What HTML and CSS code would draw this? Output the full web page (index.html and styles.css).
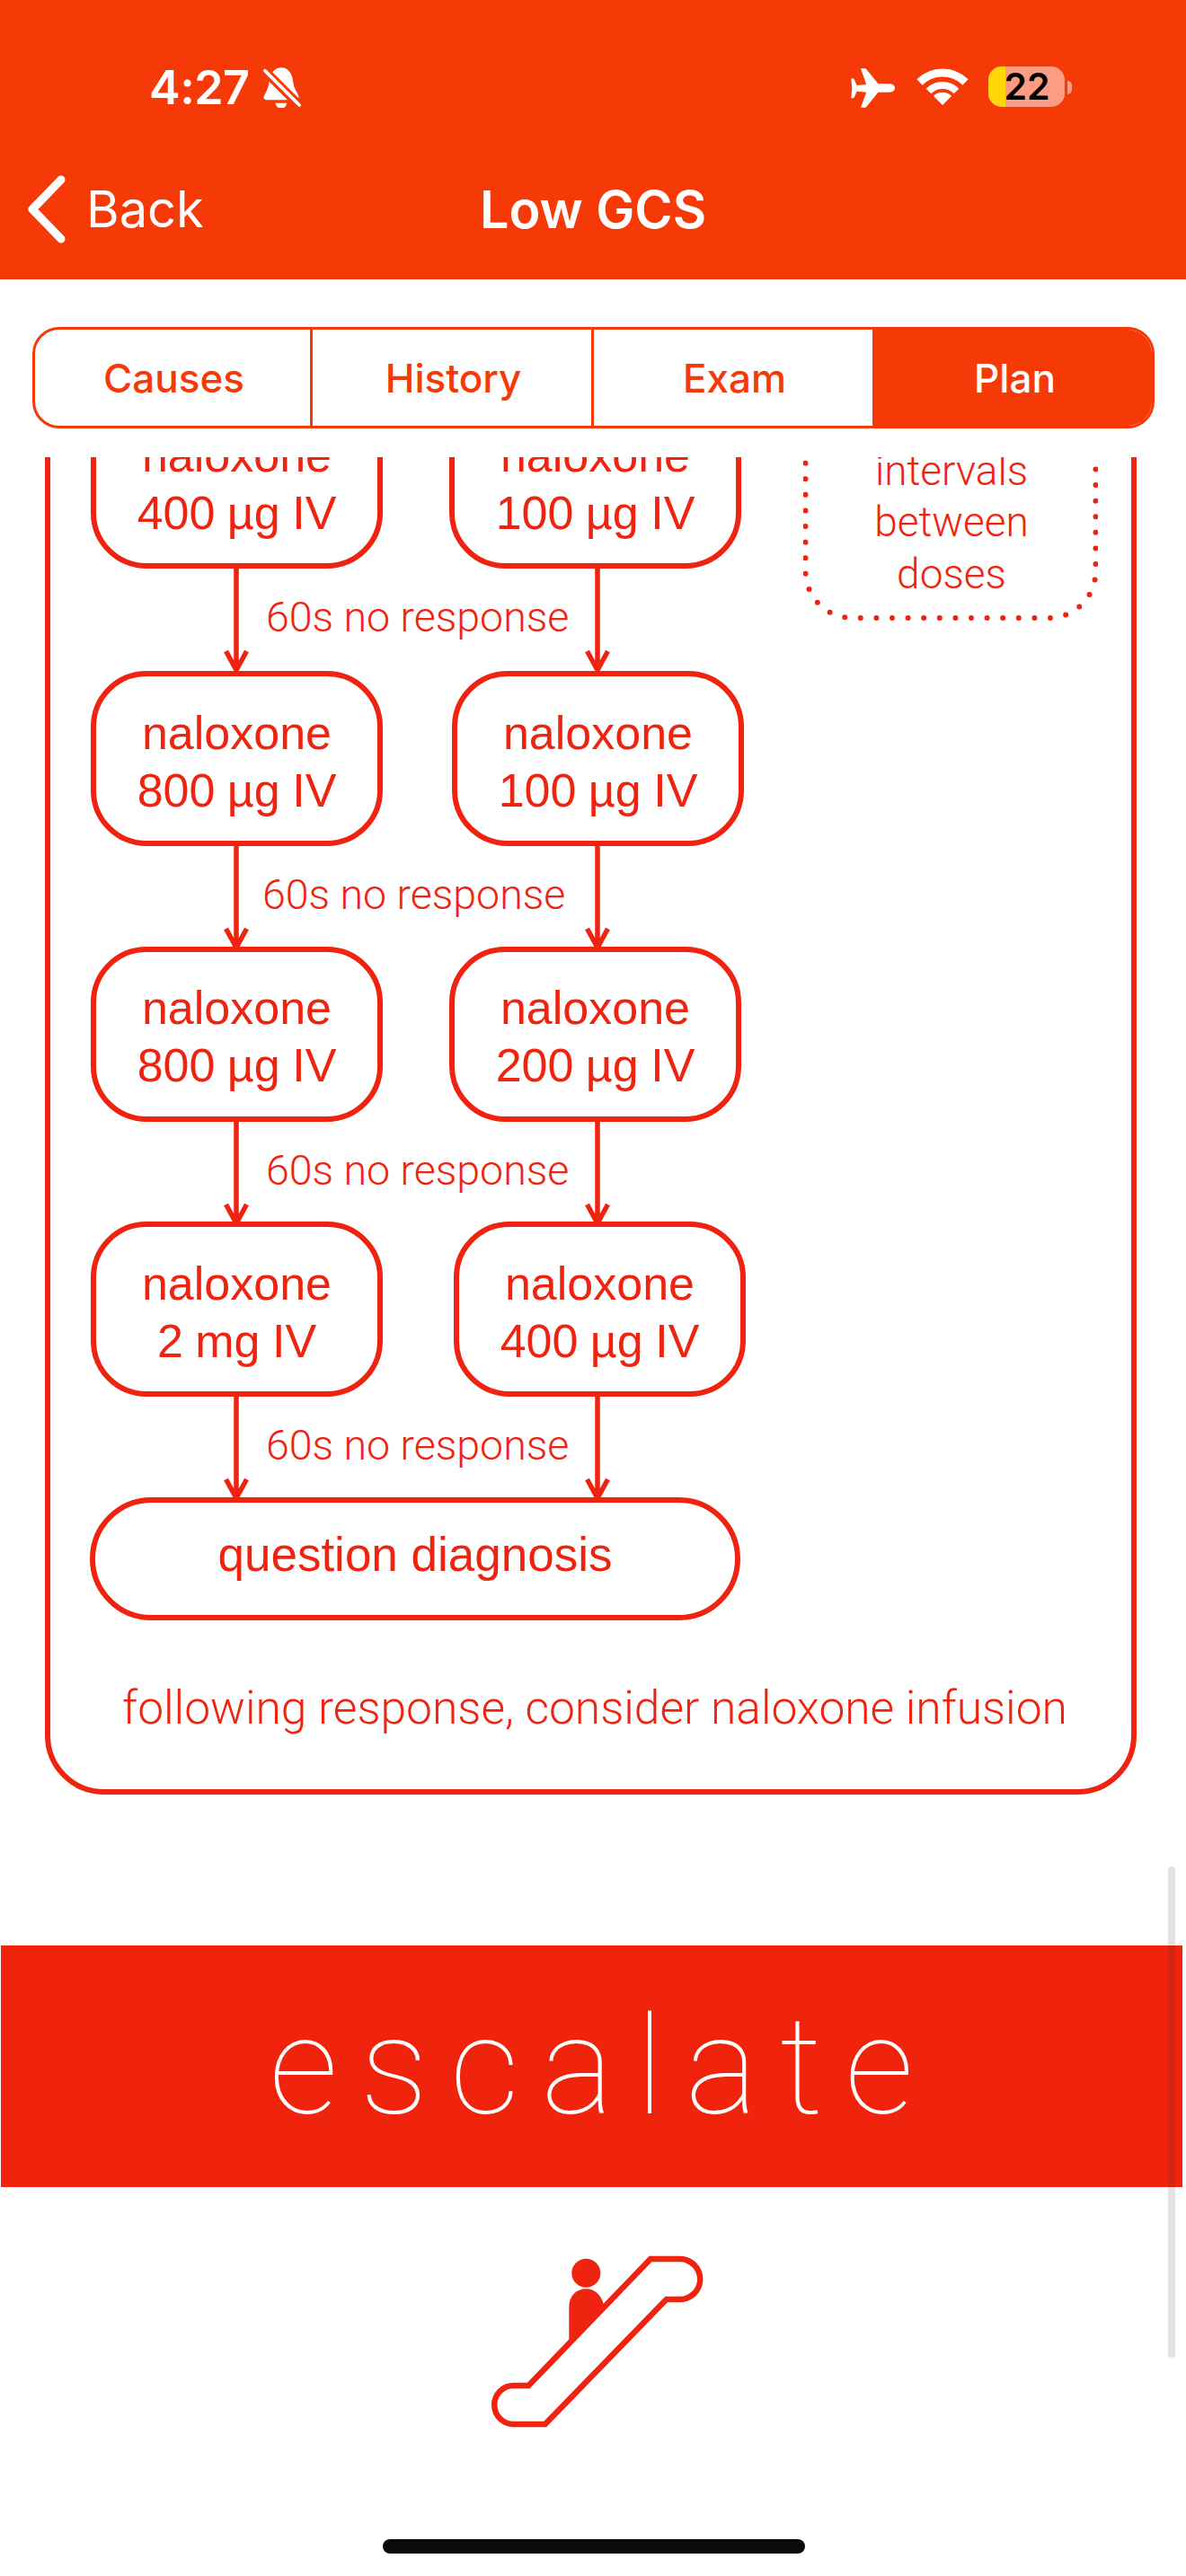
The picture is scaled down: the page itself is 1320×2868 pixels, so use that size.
FILE: index.html
```html
<!doctype html>
<html>
<head>
  <title>Low GCS</title>
  <link rel="stylesheet" href="styles.css">
</head>
<body>

  <header class="top">
    <div class="status">
      <div class="status-left">
        <span class="clock">4:27</span>
        <svg class="bell" viewBox="485 75 127 135">
          <path fill="#fff" d="M546 76C568 76 582 94 585 122C588 150 604 164 604 174C604 181 598 184 592 184H498C491 184 486 180 487 174C489 165 503 150 505 122C508 94 524 76 546 76Z"/>
          <path fill="#fff" d="M526 194H564C562 218 529 218 526 194Z"/>
          <path stroke="#f53a08" stroke-width="30" d="M480 76L618 214"/>
          <path stroke="#fff" stroke-width="11" stroke-linecap="round" d="M491 86L606 201"/>
        </svg>
      </div>
      <div class="status-right">
        <svg class="plane" viewBox="80 78 148 132">
          <path fill="#fff" d="M113 78H130L172 130H210C222 130 228 138 228 144C228 151 222 158 210 158H172L130 210H113L132 158L100 155L90 178H81L84 145L81 112H90L100 135L132 132Z"/>
        </svg>
        <svg class="wifi" viewBox="0 0 58 42">
          <path fill="none" stroke="#fff" stroke-width="9" d="M3.5 15.5A36 36 0 0 1 54.500 15.500"/>
          <path fill="none" stroke="#fff" stroke-width="8" d="M13.500 25.500A22 22 0 0 1 44.500 25.500"/>
          <path fill="#fff" d="M29 41L19 31A14 14 0 0 1 39 31Z"/>
        </svg>
        <div class="battery">
          <div class="battery-level"></div>
          <span class="battery-num">22</span>
        </div>
        <div class="battery-cap"></div>
      </div>
    </div>
    <nav class="navbar">
      <div class="back">
        <svg class="chevron" viewBox="0 0 44 76">
          <path fill="none" stroke="#fff" stroke-width="9" stroke-linecap="round" stroke-linejoin="round" d="M38 5L6 38L38 71"/>
        </svg>
        <span>Back</span>
      </div>
      <div class="nav-title">Low GCS</div>
    </nav>
  </header>

  <div class="tabs">
    <div class="tab">Causes</div>
    <div class="tab">History</div>
    <div class="tab">Exam</div>
    <div class="tab tab-on">Plan</div>
  </div>

  <main class="scroll">
    <section class="panel">

      <div class="row">
        <div class="box">naloxone<br>400 µg IV</div>
        <div class="box">naloxone<br>100 µg IV</div>
        <div class="note">
          <svg class="note-dots" viewBox="0 0 328 300">
            <rect x="2.500" y="-60" width="323" height="357" rx="52" fill="none" stroke="#ee2410" stroke-width="6" stroke-linecap="round" stroke-dasharray="0 17.600"/>
          </svg>
          <div class="note-text">intervals<br>between<br>doses</div>
        </div>
      </div>

      <div class="link link-first">
        <svg class="arrow" viewBox="0 0 28 115"><path d="M14 0V113M2.500 92L14 113L25.500 92"/></svg>
        <div class="link-label">60s no response</div>
        <svg class="arrow" viewBox="0 0 28 115"><path d="M14 0V113M2.500 92L14 113L25.500 92"/></svg>
      </div>

      <div class="row">
        <div class="box">naloxone<br>800 µg IV</div>
        <div class="box box-r2">naloxone<br>100 µg IV</div>
      </div>

      <div class="link link-alt">
        <svg class="arrow" viewBox="0 0 28 115"><path d="M14 0V113M2.500 92L14 113L25.500 92"/></svg>
        <div class="link-label">60s no response</div>
        <svg class="arrow" viewBox="0 0 28 115"><path d="M14 0V113M2.500 92L14 113L25.500 92"/></svg>
      </div>

      <div class="row">
        <div class="box">naloxone<br>800 µg IV</div>
        <div class="box">naloxone<br>200 µg IV</div>
      </div>

      <div class="link">
        <svg class="arrow" viewBox="0 0 28 115"><path d="M14 0V113M2.500 92L14 113L25.500 92"/></svg>
        <div class="link-label">60s no response</div>
        <svg class="arrow" viewBox="0 0 28 115"><path d="M14 0V113M2.500 92L14 113L25.500 92"/></svg>
      </div>

      <div class="row">
        <div class="box">naloxone<br>2 mg IV</div>
        <div class="box box-r4">naloxone<br>400 µg IV</div>
      </div>

      <div class="link">
        <svg class="arrow" viewBox="0 0 28 115"><path d="M14 0V113M2.500 92L14 113L25.500 92"/></svg>
        <div class="link-label">60s no response</div>
        <svg class="arrow" viewBox="0 0 28 115"><path d="M14 0V113M2.500 92L14 113L25.500 92"/></svg>
      </div>

      <div class="box-wide">question diagnosis</div>

      <p class="footnote">following response, consider naloxone infusion</p>
    </section>

    <div class="banner">escalate</div>

    <div class="icon-wrap">
      <svg class="escalator" viewBox="500 2460 320 260">
        <circle cx="652.300" cy="2530.700" r="16" fill="#ee2410"/>
        <path fill="#ee2410" d="M633.300 2606V2568C633.300 2556 642 2548.300 652.300 2548.300C662 2548.300 669 2555 672 2566Z"/>
        <path fill="#fff" stroke="#ee2410" stroke-width="6.500" stroke-linejoin="miter" d="M724 2515H756.700A22.500 22.500 0 0 1 756.700 2560H741.700L606.700 2699H571.700A21.500 21.500 0 0 1 571.700 2656H588.300Z"/>
      </svg>
    </div>
  </main>

  <div class="scrollbar"></div>
  <div class="home-bar"></div>

</body>
</html>
```

FILE: styles.css
```css
html, body {
  margin: 0;
  padding: 0;
}

body {
  width: 1320px;
  height: 2868px;
  overflow: hidden;
  position: relative;
  display: flex;
  flex-direction: column;
  background: #fff;
  font-family: "Liberation Sans", Arial, sans-serif;
  color: #ee2410;
}

/* header */

.top {
  height: 311px;
  flex: none;
  background: #f53a08;
  color: #fff;
  font-family: Inter, "Liberation Sans", sans-serif;
}

.status {
  height: 173px;
  display: flex;
  justify-content: space-between;
  box-sizing: border-box;
  padding: 74px 127px 0 166px;
}

.status-left {
  display: flex;
  align-items: flex-start;
}

.clock {
  font-size: 52px;
  line-height: 52px;
  font-weight: 600;
  letter-spacing: -0.5px;
  margin-top: -2px;
}

.bell {
  width: 44px;
  height: 45px;
  margin: 1px 0 0 14px;
}

.status-right {
  display: flex;
  align-items: flex-start;
}

.plane {
  width: 49px;
  height: 44px;
  margin: 2px 24px 0 0;
}

.wifi {
  width: 58px;
  height: 42px;
  margin: 2px 22px 0 0;
}

.battery {
  width: 85px;
  height: 45px;
  border-radius: 15px;
  position: relative;
  background: #fd9c84;
}

.battery-level {
  width: 19px;
  height: 100%;
  border-radius: 15px 0 0 15px;
  background: #ffd60a;
}

.battery-num {
  position: absolute;
  left: 13px;
  top: 0;
  width: 60px;
  text-align: center;
  color: #000;
  font-size: 41px;
  line-height: 45px;
  font-weight: 600;
}

.battery-cap {
  width: 5px;
  height: 15px;
  margin: 16px 0 0 3px;
  background: #fd9c84;
  border-radius: 0 8px 8px 0;
}

.navbar {
  height: 138px;
  display: flex;
  position: relative;
  justify-content: center;
}

.back {
  position: absolute;
  left: 30px;
  top: 22px;
  display: flex;
  align-items: center;
  gap: 22px;
  font-size: 56px;
  line-height: 76px;
}

.chevron {
  width: 44px;
  height: 76px;
}

.nav-title {
  font-size: 57.500px;
  font-weight: 600;
  line-height: 76px;
  margin-top: 22px;
}

/* segmented control */

.tabs {
  flex: none;
  box-sizing: border-box;
  width: 1249px;
  height: 113px;
  margin: 53px 0 32px 36px;
  display: grid;
  grid-template-columns: 309px 313px 313px 1fr;
  border: 3.500px solid #f53a08;
  border-radius: 30px;
  overflow: hidden;
  color: #f53a08;
  font-family: Inter, "Liberation Sans", sans-serif;
  font-size: 44px;
  font-weight: 450;
}

.tab {
  display: flex;
  align-items: center;
  justify-content: center;
  padding-left: 3px;
  border-right: 3px solid #f53a08;
}

.tab-on {
  background: #f53a08;
  color: #fff;
  border-right: 0;
}

/* flowchart */

.scroll {
  flex: 1;
  overflow: hidden;
}

.panel {
  box-sizing: border-box;
  width: 1215px;
  height: 1663px;
  margin: -174px 0 0 50px;
  padding: 97px 0 0 45px;
  border: 6px solid #ee2410;
  border-radius: 66px;
}

.row {
  display: flex;
  align-items: flex-start;
  height: 195px;
}

.box {
  box-sizing: border-box;
  flex: none;
  width: 325px;
  height: 195px;
  margin-right: 74px;
  padding-top: 6px;
  border: 6px solid #ee2410;
  border-radius: 62px;
  display: flex;
  align-items: center;
  justify-content: center;
  text-align: center;
  font-size: 52px;
  line-height: 64px;
  word-spacing: -1px;
  background: #fff;
}

.box-r2 {
  transform: translateX(3px);
}

.box-r4 {
  transform: translateX(5px);
}

.note {
  flex: none;
  width: 328px;
  height: 300px;
  margin: -47px 0 0 -5px;
  position: relative;
  display: flex;
  align-items: flex-end;
  justify-content: center;
}

.note-dots {
  position: absolute;
  left: 0;
  top: 0;
  width: 328px;
  height: 300px;
}

.note-text {
  padding: 0 0 23px 2px;
  text-align: center;
  font-family: Roboto, "Liberation Sans", sans-serif;
  font-weight: 300;
  font-size: 46px;
  line-height: 57.500px;
}

.link {
  height: 111.670px;
  display: flex;
  align-items: stretch;
  padding-left: 148px;
}

.link-first {
  height: 114px;
}

.arrow {
  flex: none;
  width: 28px;
  height: 115px;
  fill: none;
  stroke: #ee2410;
  stroke-width: 5.500;
}

.link-label {
  flex: none;
  width: 374px;
  box-sizing: border-box;
  padding: 26px 0 0 19px;
  font-family: Roboto, "Liberation Sans", sans-serif;
  font-weight: 300;
  font-size: 46.500px;
  line-height: 56px;
}

.link-alt .link-label {
  padding-left: 15px;
}

.box-wide {
  box-sizing: border-box;
  width: 724px;
  height: 137px;
  margin-left: -1px;
  padding-bottom: 9px;
  border: 6px solid #ee2410;
  border-radius: 69px;
  display: flex;
  align-items: center;
  justify-content: center;
  font-size: 53px;
  background: #fff;
}

.footnote {
  margin: 68.500px 0 0 0;
  width: 1122px;
  text-align: center;
  font-family: Roboto, "Liberation Sans", sans-serif;
  font-weight: 300;
  font-size: 51.500px;
  line-height: 60px;
}

/* escalate */

.banner {
  box-sizing: border-box;
  width: 1315px;
  height: 269px;
  margin: 168px 0 0 1px;
  background: #f0230c;
  color: #fff;
  display: flex;
  align-items: center;
  justify-content: center;
  font-family: Roboto, "Liberation Sans", sans-serif;
  font-weight: 100;
  font-size: 152px;
  letter-spacing: 24.500px;
  padding-left: 24px;
}

.icon-wrap {
  display: flex;
  justify-content: center;
  margin-top: 25px;
}

.escalator {
  width: 320px;
  height: 260px;
}

/* overlays */

.scrollbar {
  position: absolute;
  left: 1300px;
  top: 2078px;
  width: 8px;
  height: 547px;
  border-radius: 4px;
  background: rgba(60, 60, 60, 0.14);
}

.home-bar {
  position: absolute;
  left: 426px;
  top: 2827px;
  width: 470px;
  height: 16px;
  border-radius: 8px;
  background: #0a0a0a;
}
```
